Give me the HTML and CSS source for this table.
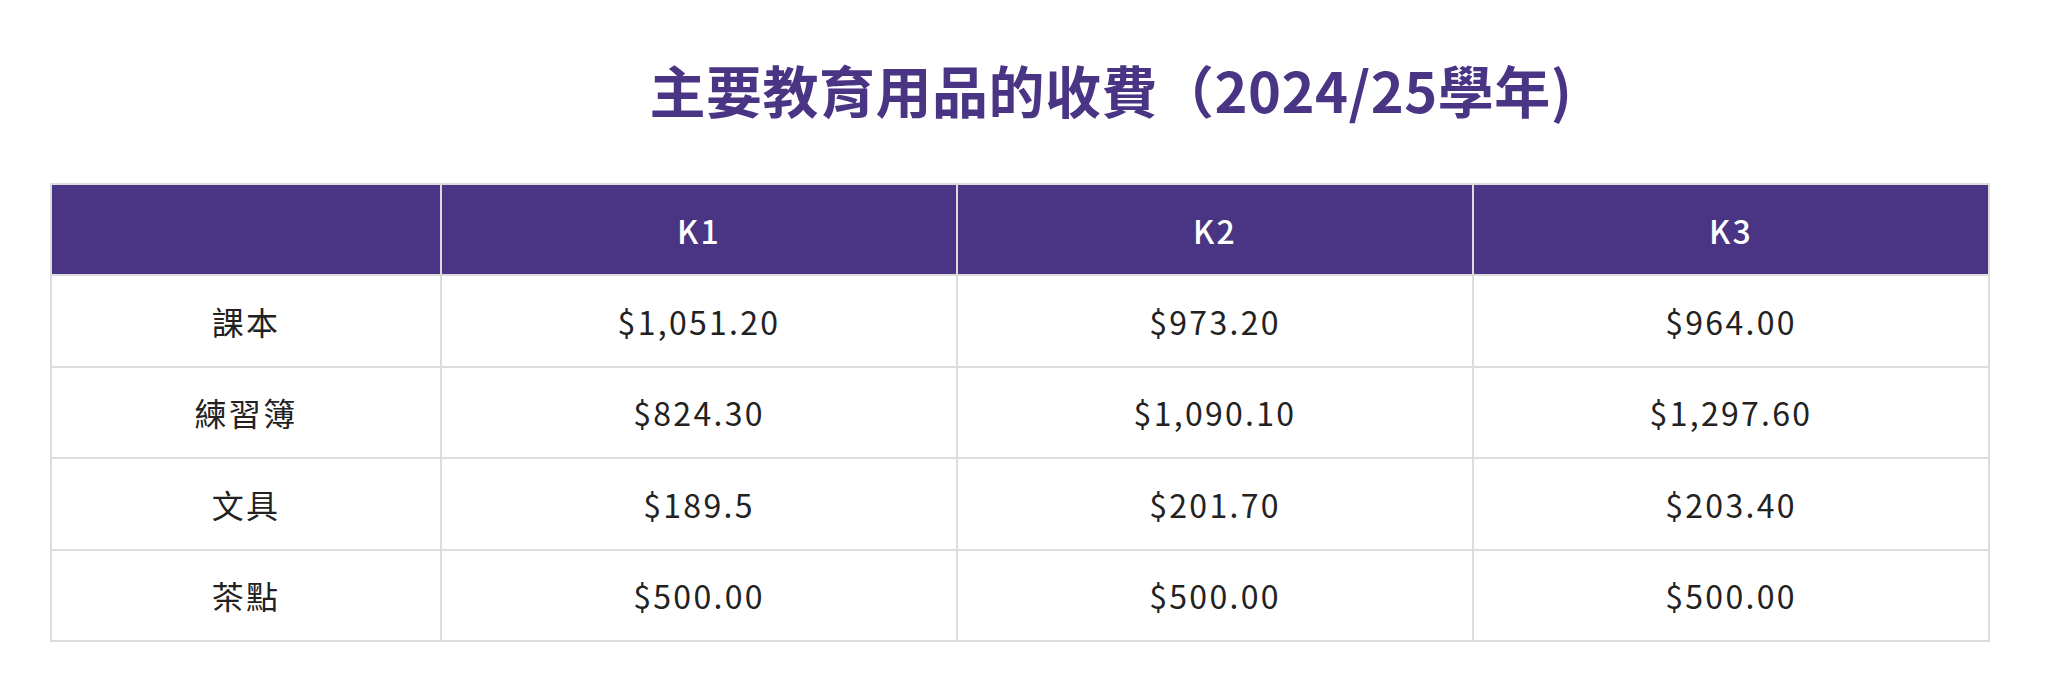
FILE: index.html
```html
<!DOCTYPE html>
<html lang="zh-Hant">
<head>
<meta charset="utf-8">
<title>主要教育用品的收費</title>
<link rel="stylesheet" href="styles.css">
</head>
<body>
<main class="page">
  <h1 class="title">主要教育用品的收費（2024/25學年)</h1>
  <table class="fees">
    <colgroup>
      <col class="col-label">
      <col class="col-grade">
      <col class="col-grade">
      <col class="col-grade">
    </colgroup>
    <thead>
      <tr>
        <th></th>
        <th>K1</th>
        <th>K2</th>
        <th>K3</th>
      </tr>
    </thead>
    <tbody>
      <tr><td>課本</td><td>$1,051.20</td><td>$973.20</td><td>$964.00</td></tr>
      <tr><td>練習簿</td><td>$824.30</td><td>$1,090.10</td><td>$1,297.60</td></tr>
      <tr><td>文具</td><td>$189.5</td><td>$201.70</td><td>$203.40</td></tr>
      <tr><td>茶點</td><td>$500.00</td><td>$500.00</td><td>$500.00</td></tr>
    </tbody>
  </table>
</main>
</body>
</html>
```

FILE: styles.css
```css
html, body {
  margin: 0;
  padding: 0;
  background: #ffffff;
}

body {
  font-family: "Noto Sans CJK TC", "Noto Sans", sans-serif;
  color: #222222;
}

.page {
  width: 1938px;
  padding: 53px 0 0 50px;
}

.title {
  margin: 0 0 58px 0;
  padding-left: 184px;
  text-align: center;
  font-size: 56px;
  line-height: 72px;
  font-weight: 700;
  letter-spacing: 0.5px;
  color: #4a3585;
}

.fees {
  width: 1938px;
  border-collapse: collapse;
  table-layout: fixed;
}

.col-label {
  width: 390px;
}

.col-grade {
  width: 516px;
}

.fees th,
.fees td {
  border: 2px solid #dcdcdc;
  text-align: center;
  vertical-align: middle;
  font-size: 32px;
  letter-spacing: 2.3px;
  padding: 0;
}

.fees th {
  height: 89px;
  background: #4a3584;
  color: #ffffff;
  font-weight: 500;
}

.fees td {
  height: 89.5px;
  font-weight: 400;
}
```
